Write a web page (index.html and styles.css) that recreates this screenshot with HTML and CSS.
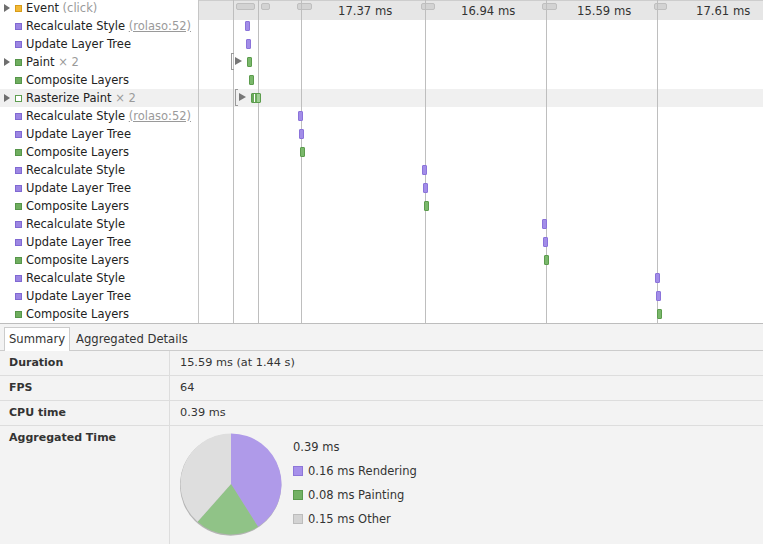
FILE: index.html
```html
<!DOCTYPE html>
<html>
<head>
<meta charset="utf-8">
<link rel="stylesheet" href="styles.css">
</head>
<body>
<div class="app">
  <div class="flame">
    <div class="list">
      <div class="row"><span class="tri"></span><span class="sq orange"></span><span class="name">Event <span class="dim">(click)</span></span></div>
      <div class="row"><span class="tri none"></span><span class="sq purple"></span><span class="name">Recalculate Style <span class="link">(rolaso:52)</span></span></div>
      <div class="row"><span class="tri none"></span><span class="sq purple"></span><span class="name">Update Layer Tree</span></div>
      <div class="row"><span class="tri"></span><span class="sq green"></span><span class="name">Paint <span class="dim">× 2</span></span></div>
      <div class="row"><span class="tri none"></span><span class="sq green"></span><span class="name">Composite Layers</span></div>
      <div class="row sel"><span class="tri"></span><span class="sq hollow"></span><span class="name">Rasterize Paint <span class="dim">× 2</span></span></div>
      <div class="row"><span class="tri none"></span><span class="sq purple"></span><span class="name">Recalculate Style <span class="link">(rolaso:52)</span></span></div>
      <div class="row"><span class="tri none"></span><span class="sq purple"></span><span class="name">Update Layer Tree</span></div>
      <div class="row"><span class="tri none"></span><span class="sq green"></span><span class="name">Composite Layers</span></div>
      <div class="row"><span class="tri none"></span><span class="sq purple"></span><span class="name">Recalculate Style</span></div>
      <div class="row"><span class="tri none"></span><span class="sq purple"></span><span class="name">Update Layer Tree</span></div>
      <div class="row"><span class="tri none"></span><span class="sq green"></span><span class="name">Composite Layers</span></div>
      <div class="row"><span class="tri none"></span><span class="sq purple"></span><span class="name">Recalculate Style</span></div>
      <div class="row"><span class="tri none"></span><span class="sq purple"></span><span class="name">Update Layer Tree</span></div>
      <div class="row"><span class="tri none"></span><span class="sq green"></span><span class="name">Composite Layers</span></div>
      <div class="row"><span class="tri none"></span><span class="sq purple"></span><span class="name">Recalculate Style</span></div>
      <div class="row"><span class="tri none"></span><span class="sq purple"></span><span class="name">Update Layer Tree</span></div>
      <div class="row"><span class="tri none"></span><span class="sq green"></span><span class="name">Composite Layers</span></div>
    </div>
    <div class="chart">
      <div class="stripes">
        <div class="stripe"></div><div class="stripe"></div><div class="stripe"></div>
        <div class="stripe"></div><div class="stripe"></div><div class="stripe sel"></div>
        <div class="stripe"></div><div class="stripe"></div><div class="stripe"></div>
        <div class="stripe"></div><div class="stripe"></div><div class="stripe"></div>
        <div class="stripe"></div><div class="stripe"></div><div class="stripe"></div>
        <div class="stripe"></div><div class="stripe"></div><div class="stripe"></div>
      </div>
      <div class="ruler">
        <span class="marker" style="left:37px;width:19px"></span>
        <span class="marker" style="left:62px;width:9px"></span>
        <span class="marker" style="left:98px;width:15px"></span>
        <span class="marker" style="left:222px;width:14px"></span>
        <span class="marker" style="left:343px;width:15px"></span>
        <span class="marker" style="left:455px;width:13px"></span>
        <span class="label" style="left:139px">17.37 ms</span>
        <span class="label" style="left:262px">16.94 ms</span>
        <span class="label" style="left:378px">15.59 ms</span>
        <span class="label" style="left:497px">17.61 ms</span>
      </div>
      <span class="gridline" style="left:34px"></span>
      <span class="gridline" style="left:59px"></span>
      <span class="gridline" style="left:102px"></span>
      <span class="gridline" style="left:226px"></span>
      <span class="gridline" style="left:347px"></span>
      <span class="gridline" style="left:458px"></span>

      <span class="bar purple" style="left:46px;top:21px"></span>
      <span class="bar purple" style="left:47px;top:39px"></span>
      <span class="bracket" style="left:32px;top:53px"></span>
      <span class="expand" style="left:36px;top:57px"></span>
      <span class="bar green" style="left:48px;top:57px"></span>
      <span class="bar green" style="left:50px;top:75px"></span>
      <span class="bracket" style="left:36px;top:89px"></span>
      <span class="expand" style="left:40px;top:93px"></span>
      <span class="bar raster" style="left:52px;top:93px"></span>
      <span class="bar purple" style="left:99px;top:111px"></span>
      <span class="bar purple" style="left:100px;top:129px"></span>
      <span class="bar green" style="left:101px;top:147px"></span>
      <span class="bar purple" style="left:223px;top:165px"></span>
      <span class="bar purple" style="left:224px;top:183px"></span>
      <span class="bar green" style="left:225px;top:201px"></span>
      <span class="bar purple" style="left:343px;top:219px"></span>
      <span class="bar purple" style="left:344px;top:237px"></span>
      <span class="bar green" style="left:345px;top:255px"></span>
      <span class="bar purple" style="left:456px;top:273px"></span>
      <span class="bar purple" style="left:457px;top:291px"></span>
      <span class="bar green" style="left:458px;top:309px"></span>
    </div>
  </div>

  <div class="details">
    <div class="tabs">
      <div class="tab active">Summary</div>
      <div class="tab">Aggregated Details</div>
    </div>
    <div class="props">
      <div class="prop"><div class="key">Duration</div><div class="val">15.59 ms (at 1.44 s)</div></div>
      <div class="prop"><div class="key">FPS</div><div class="val">64</div></div>
      <div class="prop"><div class="key">CPU time</div><div class="val">0.39 ms</div></div>
      <div class="prop last">
        <div class="key">Aggregated Time</div>
        <div class="val agg">
          <svg class="pie" width="104" height="104" viewBox="0 0 104 104">
            <circle cx="50.6" cy="52" r="50.7" fill="#b4b4b4"/>
            <path d="M51,51 L51,0.5 A50.5,50.5 0 0 1 77.99,93.69 Z" fill="#af9ae9"/>
            <path d="M51,51 L77.99,93.69 A50.5,50.5 0 0 1 17.54,88.82 Z" fill="#90c387"/>
            <path d="M51,51 L17.54,88.82 A50.5,50.5 0 0 1 51,0.5 Z" fill="#dedede"/>
          </svg>
          <div class="legend">
            <div class="total">0.39 ms</div>
            <div class="item"><span class="box lp"></span>0.16 ms Rendering</div>
            <div class="item"><span class="box lg"></span>0.08 ms Painting</div>
            <div class="item"><span class="box lo"></span>0.15 ms Other</div>
          </div>
        </div>
      </div>
    </div>
  </div>
</div>
</body>
</html>
```

FILE: styles.css
```css
html, body {
  margin: 0;
  padding: 0;
  background: #ffffff;
}
body {
  font-family: "DejaVu Sans", "Liberation Sans", sans-serif;
  font-size: 11px;
  color: #222222;
}
.app {
  width: 763px;
  height: 544px;
  overflow: hidden;
  display: flex;
  flex-direction: column;
}

/* ---------- flame chart ---------- */
.flame {
  height: 323px;
  display: flex;
  border-bottom: 1px solid #bdbdbd;
  overflow: hidden;
  flex: none;
}
.list {
  width: 198px;
  border-right: 1px solid #c6c6c6;
  margin-top: -1px;
  flex: none;
  font-size: 11.5px;
}
.row {
  height: 18px;
  display: flex;
  align-items: center;
  white-space: nowrap;
}
.row.sel { background: #f0f0f0; }
.tri {
  width: 0;
  height: 0;
  border-left: 6px solid #6e6e6e;
  border-top: 4px solid transparent;
  border-bottom: 4px solid transparent;
  margin-left: 4px;
  margin-right: 5px;
}
.tri.none { border-left-color: transparent; }
.sq {
  width: 5px;
  height: 5px;
  border: 1px solid;
  margin-right: 4px;
}
.sq.orange { background: #f3b936; border-color: #d89c19; }
.sq.purple { background: #9c86e3; border-color: #8069d2; }
.sq.green  { background: #6fae5f; border-color: #56954a; }
.sq.hollow { background: #ffffff; border-color: #5d9d4f; }
.name { color: #222222; }
.dim { color: #9a9a9a; }
.link { color: #9a9a9a; text-decoration: underline; }

.chart {
  flex: 1;
  position: relative;
  overflow: hidden;
}
.stripes { margin-top: -1px; }
.stripe { height: 18px; }
.stripe.sel { background: #f0f0f0; }
.ruler {
  position: absolute;
  left: 0;
  right: 0;
  top: 0;
  height: 19px;
  background: #e6e6e6;
  border-top: 1px solid #cdcdcd;
}
.marker {
  position: absolute;
  top: 2px;
  height: 7px;
  background: #d3d3d3;
  border: 1px solid #bfbfbf;
  border-radius: 2px;
  box-sizing: border-box;
}
.label {
  position: absolute;
  top: 3px;
  font-size: 11.6px;
  line-height: 14px;
  color: #333333;
  white-space: nowrap;
}
.gridline {
  position: absolute;
  top: 0;
  bottom: 0;
  width: 1px;
  background: #bebebe;
}
.bar {
  position: absolute;
  width: 5px;
  height: 10px;
  box-sizing: border-box;
  border: 1px solid;
  border-radius: 1px;
}
.bar.purple { background: #a28de8; border-color: #8b73da; }
.bar.green { background: #7ab86b; border-color: #5c9c4d; }
.bar.raster {
  width: 10px;
  border-color: #5c9c4d;
  background: linear-gradient(to right, #6aaa5b 0, #6aaa5b 2px, #ffffff 2px, #ffffff 3px, #6aaa5b 3px, #6aaa5b 5px, #9fcf94 5px);
}
.bracket {
  position: absolute;
  width: 3px;
  height: 17px;
  box-sizing: border-box;
  border: 1px solid #9a9a9a;
  border-right: none;
}
.expand {
  position: absolute;
  width: 0;
  height: 0;
  border-left: 7px solid #777777;
  border-top: 4px solid transparent;
  border-bottom: 4px solid transparent;
}

/* ---------- details ---------- */
.details {
  flex: 1;
  background: #f3f3f3;
  display: flex;
  flex-direction: column;
}
.tabs {
  height: 27px;
  border-bottom: 1px solid #cccccc;
  display: flex;
  align-items: flex-end;
  padding-left: 4px;
  box-sizing: border-box;
  flex: none;
}
.tab {
  height: 23px;
  line-height: 23px;
  padding: 0 4px 0 4px;
  color: #333333;
  font-size: 11.6px;
  margin-bottom: -1px;
  border: 1px solid transparent;
  border-bottom: none;
}
.tab + .tab { padding-left: 5px; }
.tab.active {
  background: #ffffff;
  border-color: #cccccc;
}
.props {
  flex: 1;
  display: flex;
  flex-direction: column;
}
.prop {
  display: flex;
  height: 24px;
  border-bottom: 1px solid #dddddd;
  flex: none;
}
.prop.last {
  flex: 1;
  border-bottom: none;
}
.key {
  width: 160px;
  padding-left: 9px;
  border-right: 1px solid #dddddd;
  font-weight: bold;
  color: #333333;
  line-height: 24px;
  font-size: 11px;
  flex: none;
}
.val {
  padding-left: 10px;
  line-height: 24px;
  color: #333333;
  font-size: 11.3px;
}
.prop.last .key { line-height: 22px; padding-top: 1px; }
.agg {
  display: flex;
  align-items: flex-start;
  padding-top: 7px;
}
.pie { display: block; flex: none; }
.legend {
  margin-left: 9px;
  padding-top: 2px;
  font-size: 11.5px;
}
.total { line-height: 24px; }
.item {
  display: flex;
  align-items: center;
  height: 24px;
}
.box {
  width: 8px;
  height: 8px;
  border: 1px solid;
  margin-right: 5px;
}
.box.lp { background: #a690ea; border-color: #8d76d9; }
.box.lg { background: #72b163; border-color: #5a9a4c; }
.box.lo { background: #d3d3d3; border-color: #bcbcbc; }
```
